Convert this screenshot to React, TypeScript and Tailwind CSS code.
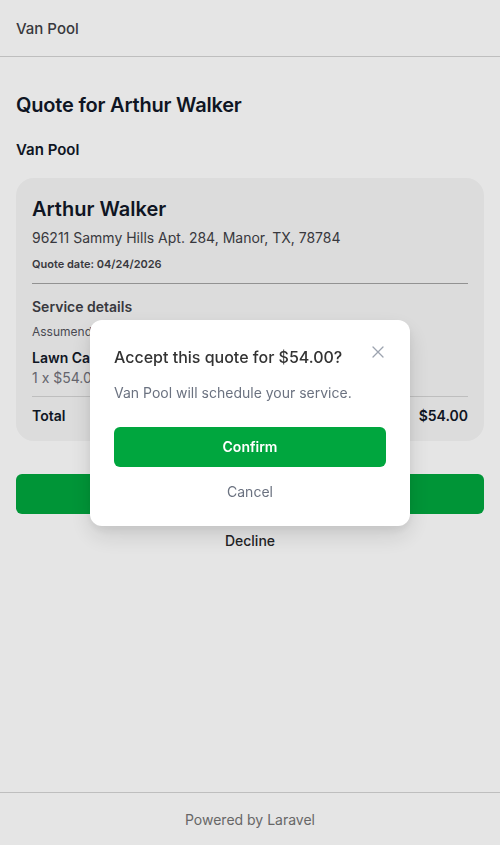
import React from "react";

export default function App() {
  return (
    <div className="relative min-h-screen bg-white text-[#1b1b18]" style={{ fontFamily: "Inter, 'Noto Sans', sans-serif" }}>
      <div className="flex min-h-screen flex-col">
        <header className="flex h-[57px] items-center border-b border-[#d4d4d4] px-4 pt-[2px]">
          <span className="text-[15px] font-medium text-[#3f3f46]">Van Pool</span>
        </header>
        <main className="flex-1 px-4 pt-[34px]">
          <h1 className="text-[20px] font-semibold leading-[28px] tracking-[-0.2px] text-[#111827]">Quote for Arthur Walker</h1>
          <h2 className="mt-[20px] text-[15px] font-semibold leading-[22px] text-[#111827]">Van Pool</h2>
          <div className="mt-[17px] rounded-[18px] bg-[#f5f5f5] px-4 pb-[15px] pt-[16px]">
            <div className="text-[20px] font-semibold leading-[30px] text-[#111827]">Arthur Walker</div>
            <div className="mt-[4px] text-[14px] leading-[20px] text-[#3f3f46]">96211 Sammy Hills Apt. 284, Manor, TX, 78784</div>
            <div className="mt-[8px] text-[11px] font-semibold leading-[16px] text-[#3f3f46]">Quote date: 04/24/2026</div>
            <div className="mt-[11px] border-t border-[#a3a3a3]" />
            <div className="mt-[13px] text-[14px] font-semibold leading-[20px] text-[#3f3f46]">Service details</div>
            <div className="mt-[7px] text-[12px] leading-[16px] text-[#52525b]">Assumenda et vitae quibusdam.</div>
            <div className="mt-[8px] text-[14px] font-semibold leading-[20px] text-[#111827]">Lawn Care</div>
            <div className="text-[14px] leading-[20px] text-[#71717a]">1 x $54.00</div>
            <div className="mt-[8px] border-t border-[#d4d4d4]" />
            <div className="mt-[9px] flex items-center justify-between text-[14px] font-semibold leading-[20px] text-[#111827]">
              <span>Total</span>
              <span>$54.00</span>
            </div>
          </div>
          <button className="mt-[33px] flex h-[40px] w-full items-center justify-center rounded-[6px] bg-[#00a63e] text-[14px] font-semibold text-white">
            Accept quote
          </button>
          <div className="mt-[17px] text-center text-[14px] font-medium leading-[20px] text-[#27272a]">Decline</div>
        </main>
        <footer className="flex h-[53px] items-center justify-center border-t border-[#d4d4d4]">
          <span className="text-[14px] text-[#737373]">Powered by Laravel</span>
        </footer>
      </div>

      <div className="fixed inset-0 flex items-center justify-center bg-black/10">
        <div className="w-[320px] rounded-[12px] bg-white px-6 pb-[24px] pt-[24px] shadow-[0_10px_25px_rgba(0,0,0,0.12),0_4px_8px_rgba(0,0,0,0.06)]">
          <div className="flex items-start justify-between">
            <div className="pt-[1px] text-[16px] font-medium leading-[24px] text-[#333333]">Accept this quote for $54.00?</div>
            <svg width="12" height="12" viewBox="0 0 12 12" className="mr-[2px] mt-[2px]" fill="none" stroke="#9ca3af" strokeWidth="1.3" strokeLinecap="round">
              <path d="M1 1L11 11M11 1L1 11" />
            </svg>
          </div>
          <div className="mt-[14px] text-[14px] leading-[20px] text-[#6b7280]">Van Pool will schedule your service.</div>
          <button className="mt-[24px] flex h-[40px] w-full items-center justify-center rounded-[6px] bg-[#00a63e] text-[14px] font-semibold text-white">
            Confirm
          </button>
          <div className="mt-[15px] text-center text-[14px] leading-[20px] text-[#6b7280]">Cancel</div>
        </div>
      </div>
    </div>
  );
}
